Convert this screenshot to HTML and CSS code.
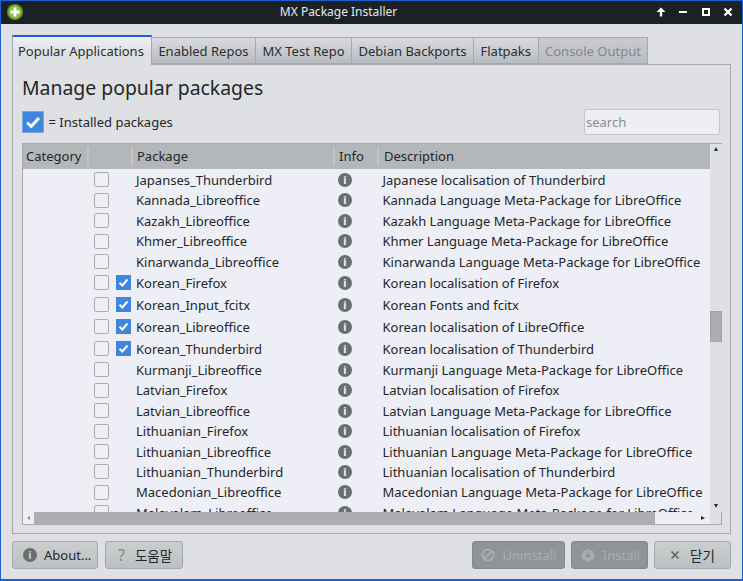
FILE: index.html
```html
<!DOCTYPE html>
<html lang="en">
<head>
<meta charset="utf-8">
<title>MX Package Installer</title>
<link rel="stylesheet" href="styles.css">
</head>
<body>
<div class="window">
  <header class="titlebar">
    <svg class="app-icon" viewBox="0 0 16 16"><circle cx="8" cy="8" r="8" fill="#5f8f2a"/><circle cx="8" cy="8" r="6.400" fill="#8cc043"/><path d="M8 3.500v9M3.500 8h9" stroke="#fff" stroke-width="2.800"/></svg>
    <div class="title">MX Package Installer</div>
    <div class="wm">
      <svg viewBox="0 0 10 10"><path d="M5 9.500V4" stroke="#fff" stroke-width="2.400"/><path d="M0.500 5 5 .5 9.500 5z" fill="#fff"/></svg>
      <svg viewBox="0 0 10 10"><path d="M1 5h8" stroke="#fff" stroke-width="2"/></svg>
      <svg viewBox="0 0 10 10"><rect x="2" y="2" width="6" height="6" fill="none" stroke="#fff" stroke-width="2"/></svg>
      <svg viewBox="0 0 10 10"><path d="M1.500 1.500l7 7M8.500 1.500l-7 7" stroke="#fff" stroke-width="2.200"/></svg>
    </div>
  </header>
  <main class="content">
    <nav class="tabs">
      <div class="tab active">Popular Applications</div>
      <div class="tab">Enabled Repos</div>
      <div class="tab">MX Test Repo</div>
      <div class="tab">Debian Backports</div>
      <div class="tab">Flatpaks</div>
      <div class="tab disabled">Console Output</div>
    </nav>
    <section class="pane">
      <h1 class="heading">Manage popular packages</h1>
      <div class="legend-row">
        <span class="big-check"><svg viewBox="0 0 22 22"><path d="M4.500 11.500l4.500 4.300L17.500 6.500" fill="none" stroke="#fff" stroke-width="3.200"/></svg></span>
        <span class="legend">= Installed packages</span>
        <div class="search">search</div>
      </div>
      <div class="table">
        <div class="table-top">
          <div class="table-main">
            <div class="thead">
              <div class="th c-cat">Category</div>
              <div class="th c-chk"></div>
              <div class="th c-pkg">Package</div>
              <div class="th c-info">Info</div>
              <div class="th c-desc">Description</div>
            </div>
            <div class="tbody" id="rows">
              <div class="row"><span class="box"></span><span class="tick-slot"></span><span class="pkg">Japanses_Thunderbird</span><span class="info">i</span><span class="desc">Japanese localisation of Thunderbird</span></div>
              <div class="row"><span class="box"></span><span class="tick-slot"></span><span class="pkg">Kannada_Libreoffice</span><span class="info">i</span><span class="desc">Kannada Language Meta-Package for LibreOffice</span></div>
              <div class="row"><span class="box"></span><span class="tick-slot"></span><span class="pkg">Kazakh_Libreoffice</span><span class="info">i</span><span class="desc">Kazakh Language Meta-Package for LibreOffice</span></div>
              <div class="row"><span class="box"></span><span class="tick-slot"></span><span class="pkg">Khmer_Libreoffice</span><span class="info">i</span><span class="desc">Khmer Language Meta-Package for LibreOffice</span></div>
              <div class="row"><span class="box"></span><span class="tick-slot"></span><span class="pkg">Kinarwanda_Libreoffice</span><span class="info">i</span><span class="desc">Kinarwanda Language Meta-Package for LibreOffice</span></div>
              <div class="row tall"><span class="box"></span><span class="tick-slot"><svg class="tick" viewBox="0 0 15 15"><path d="M3.500 7.800l2.800 2.700 5.200-6" fill="none" stroke="#fff" stroke-width="2"/></svg></span><span class="pkg">Korean_Firefox</span><span class="info">i</span><span class="desc">Korean localisation of Firefox</span></div>
              <div class="row tall"><span class="box"></span><span class="tick-slot"><svg class="tick" viewBox="0 0 15 15"><path d="M3.500 7.800l2.800 2.700 5.200-6" fill="none" stroke="#fff" stroke-width="2"/></svg></span><span class="pkg">Korean_Input_fcitx</span><span class="info">i</span><span class="desc">Korean Fonts and fcitx</span></div>
              <div class="row tall"><span class="box"></span><span class="tick-slot"><svg class="tick" viewBox="0 0 15 15"><path d="M3.500 7.800l2.800 2.700 5.200-6" fill="none" stroke="#fff" stroke-width="2"/></svg></span><span class="pkg">Korean_Libreoffice</span><span class="info">i</span><span class="desc">Korean localisation of LibreOffice</span></div>
              <div class="row tall"><span class="box"></span><span class="tick-slot"><svg class="tick" viewBox="0 0 15 15"><path d="M3.500 7.800l2.800 2.700 5.200-6" fill="none" stroke="#fff" stroke-width="2"/></svg></span><span class="pkg">Korean_Thunderbird</span><span class="info">i</span><span class="desc">Korean localisation of Thunderbird</span></div>
              <div class="row"><span class="box"></span><span class="tick-slot"></span><span class="pkg">Kurmanji_Libreoffice</span><span class="info">i</span><span class="desc">Kurmanji Language Meta-Package for LibreOffice</span></div>
              <div class="row"><span class="box"></span><span class="tick-slot"></span><span class="pkg">Latvian_Firefox</span><span class="info">i</span><span class="desc">Latvian localisation of Firefox</span></div>
              <div class="row"><span class="box"></span><span class="tick-slot"></span><span class="pkg">Latvian_Libreoffice</span><span class="info">i</span><span class="desc">Latvian Language Meta-Package for LibreOffice</span></div>
              <div class="row"><span class="box"></span><span class="tick-slot"></span><span class="pkg">Lithuanian_Firefox</span><span class="info">i</span><span class="desc">Lithuanian localisation of Firefox</span></div>
              <div class="row"><span class="box"></span><span class="tick-slot"></span><span class="pkg">Lithuanian_Libreoffice</span><span class="info">i</span><span class="desc">Lithuanian Language Meta-Package for LibreOffice</span></div>
              <div class="row"><span class="box"></span><span class="tick-slot"></span><span class="pkg">Lithuanian_Thunderbird</span><span class="info">i</span><span class="desc">Lithuanian localisation of Thunderbird</span></div>
              <div class="row"><span class="box"></span><span class="tick-slot"></span><span class="pkg">Macedonian_Libreoffice</span><span class="info">i</span><span class="desc">Macedonian Language Meta-Package for LibreOffice</span></div>
              <div class="row"><span class="box"></span><span class="tick-slot"></span><span class="pkg">Malayalam_Libreoffice</span><span class="info">i</span><span class="desc">Malayalam Language Meta-Package for LibreOffice</span></div>
            </div>
          </div>
          <div class="vscroll">
            <span class="arrow up"></span>
            <div class="vtrack"><div class="vthumb"></div></div>
            <span class="arrow down"></span>
          </div>
        </div>
        <div class="hscroll">
          <span class="arrow left"></span>
          <div class="hthumb"></div>
          <span class="arrow right"></span>
          <div class="corner"></div>
        </div>
      </div>
    </section>
    <footer class="buttons">
      <button class="btn about"><span class="info btn-info">i</span>About...</button>
      <button class="btn help"><span class="q">?</span><span class="ko">도움말</span></button>
      <span class="spacer"></span>
      <button class="btn off uninstall"><svg class="bi" viewBox="0 0 14 14"><circle cx="7" cy="7" r="5.500" fill="none" stroke="#a9adaf" stroke-width="2"/><path d="M3.500 10.500l7-7" stroke="#a9adaf" stroke-width="2"/></svg>Uninstall</button>
      <button class="btn off install"><svg class="bi" viewBox="0 0 14 14"><path d="M7 0.500l2 1.800 2.600-.3.400 2.600 2 1.400-1.200 2.300.4 2.600-2.600.5L9 13.500H5l-1.600-2.100-2.600-.5.400-2.600L0 6l2-1.400.4-2.600 2.600.3z" fill="#a9adaf"/><path d="M7 3.500v4M4.500 7 7 10l2.500-3z" stroke="#8f9496" fill="#8f9496"/></svg>Install</button>
      <button class="btn close"><svg class="xi" viewBox="0 0 10 10"><path d="M1.500 1.500l7 7M8.500 1.500l-7 7" stroke="#5d6164" stroke-width="1.600"/></svg><span class="ko">닫기</span></button>
    </footer>
  </main>
</div>
</body>
</html>
```
FILE: styles.css
```css
* { box-sizing: border-box; }
html, body { margin: 0; padding: 0; }
body {
  width: 743px;
  height: 581px;
  overflow: hidden;
  font-family: "Noto Sans", "Noto Sans CJK KR", sans-serif;
  font-size: 13px;
  color: #232629;
}
.window {
  width: 743px;
  height: 581px;
  display: flex;
  flex-direction: column;
  border: 1px solid #1c5fd6;
  border-bottom-width: 2px;
  background: #dfe0e4;
}
.titlebar {
  height: 23px;
  flex: none;
  background: #1b2226;
  display: flex;
  align-items: center;
  padding: 0 9px 2px 6px;
  color: #e6e8ea;
  font-size: 12px;
}
.app-icon { width: 16px; height: 16px; flex: none; }
.title { flex: 1; text-align: center; padding-right: 2px; }
.wm { display: flex; gap: 12.300px; }
.wm svg { width: 10px; height: 10px; display: block; }
.content {
  flex: 1;
  display: flex;
  flex-direction: column;
  padding: 11px 11px 0;
  min-height: 0;
}
.tabs {
  display: flex;
  align-items: flex-end;
  height: 29px;
  flex: none;
  position: relative;
  z-index: 1;
}
.tab {
  height: 27px;
  padding: 4px 6.500px 0;
  border: 1px solid #a5a8ad;
  border-left-width: 0;
  background: linear-gradient(#d9dadf, #b9bcc2);
  white-space: nowrap;
  color: #2a2d30;
}
.tab.active {
  height: 30px;
  margin-bottom: -1px;
  padding: 5px 7px 0 5px;
  border: 1px solid #a5a8ad;
  border-top: 2px solid #1c5fd6;
  border-bottom: 0;
  background: linear-gradient(#eff0f3, #dfe0e4 60%);
}
.tab.disabled { color: #85888c; background: linear-gradient(#c9cbd0, #b9bcc2); }
.pane {
  height: 470px;
  flex: none;
  border: 1px solid #a5a8ad;
  padding: 0 9px;
  display: flex;
  flex-direction: column;
}
.heading {
  margin: 7px 0 0;
  height: 32px;
  font-size: 19.400px;
  font-weight: 400;
  line-height: 32px;
}
.legend-row {
  margin-top: 5px;
  height: 26px;
  display: flex;
  align-items: center;
  flex: none;
}
.big-check {
  width: 22px;
  height: 22px;
  background: #3f86de;
  border: 1px solid #7aa6dc;
  display: block;
}
.big-check svg { display: block; width: 20px; height: 20px; }
.legend { margin-left: 4.500px; }
.search {
  margin-left: auto;
  margin-right: 1px;
  width: 136px;
  height: 26px;
  background: #eeeff5;
  border: 1px solid #c3c6ca;
  border-radius: 3px;
  color: #8b8e92;
  padding: 3px 1px 0;
}
.table {
  margin-top: 8px;
  width: 700px;
  height: 382px;
  flex: none;
  border: 1px solid #a5a8ad;
  background: #dfe0e4;
  display: flex;
  flex-direction: column;
}
.table-top { flex: 1; display: flex; min-height: 0; }
.table-main { width: 687px; flex: none; display: flex; flex-direction: column; min-height: 0; background: #eeeff6; }
.thead {
  height: 25px;
  flex: none;
  display: flex;
  align-items: center;
  background: #b3b7b9;
}
.th { height: 19px; line-height: 18px; padding-left: 3px; border-right: 2px solid #c2c5c7; }
.c-cat { width: 66px; }
.c-chk { width: 44px; }
.c-pkg { width: 202px; padding-left: 4px; }
.c-info { width: 44px; padding-left: 4px; }
.c-desc { border-right: 0; padding-left: 5px; }
.tbody { flex: 1; min-height: 0; overflow: hidden; padding-top: 0.800px; }
.row {
  height: 20.400px;
  display: flex;
  align-items: center;
  padding-left: 70.500px;
  white-space: nowrap;
}
.row.tall { height: 22px; }
.box {
  width: 15px;
  height: 15px;
  flex: none;
  background: #eff0f6;
  border: 1px solid #a9acb0;
  border-radius: 2px;
}
.tick-slot { width: 15px; height: 15px; margin-left: 7.500px; flex: none; }
.tick { display: block; width: 15px; height: 15px; background: #3f86de; }
.pkg { width: 202px; margin-left: 5px; flex: none; }
.info {
  width: 14px;
  height: 14px;
  border-radius: 50%;
  background: #6b6e71;
  color: #eeeff6;
  font-size: 11px;
  font-weight: 700;
  line-height: 14px;
  text-align: center;
  flex: none;
}
.desc { margin-left: 30.500px; }
.vscroll {
  width: 12px;
  flex: none;
  display: flex;
  flex-direction: column;
  background: #dfe0e4;
  padding: 0;
}
.vtrack { flex: 1; position: relative; padding-top: 160px; }
.vthumb { height: 31px; background: #adaeb2; border: 1px solid #a2a3a7; }
.arrow { display: block; flex: none; width: 0; height: 0; border: 2.500px solid transparent; }
.arrow.up { border-bottom: 4px solid #2a2d30; border-top-width: 0; margin: 3px auto 0; }
.arrow.down { border-top: 4px solid #2a2d30; border-bottom-width: 0; margin: 0 auto 4px; }
.arrow.left { border-right: 3px solid #8a8d90; border-left-width: 0; margin: 0 4px; }
.arrow.right { border-left: 4px solid #2a2d30; border-right-width: 0; position: relative; }
.hscroll {
  height: 12px;
  flex: none;
  display: flex;
  align-items: center;
  background: #eeeff3;
}
.hthumb { width: 621px; height: 12px; background: #adaeb2; }
.hscroll .arrow.right { margin-left: 46px; }
.corner { width: 11px; height: 12px; margin-left: auto; background: #dfe0e4; }
.buttons {
  flex: 1;
  display: flex;
  align-items: flex-start;
  padding-top: 7px;
}
.btn {
  height: 28px;
  font: inherit;
  color: #232629;
  border: 1px solid #a5a8ad;
  border-radius: 3px;
  background: linear-gradient(#cbcecf, #bcc0c2);
  display: flex;
  align-items: center;
  justify-content: center;
  padding: 0;
}
.about { width: 86px; justify-content: flex-start; padding-left: 10px; }
.help { width: 78px; margin-left: 7px; justify-content: flex-start; padding-left: 12px; }
.uninstall { width: 93px; }
.install { width: 77px; margin-left: 6px; padding-left: 2px; }
.close { width: 77px; margin-left: 6px; }
.spacer { flex: 1; }
.btn-info { margin-right: 7px; background: #6b6e71; color: #cbcecf; }
.q { font-size: 16px; color: #85888c; margin-right: 10px; }
.ko { font-size: 13.500px; }
.xi { width: 10px; height: 10px; margin-right: 10px; flex: none; }
.off { background: #8f9496; border-color: #85898b; color: #a9adaf; }
.bi { width: 14px; height: 14px; margin-right: 8px; flex: none; }
```
